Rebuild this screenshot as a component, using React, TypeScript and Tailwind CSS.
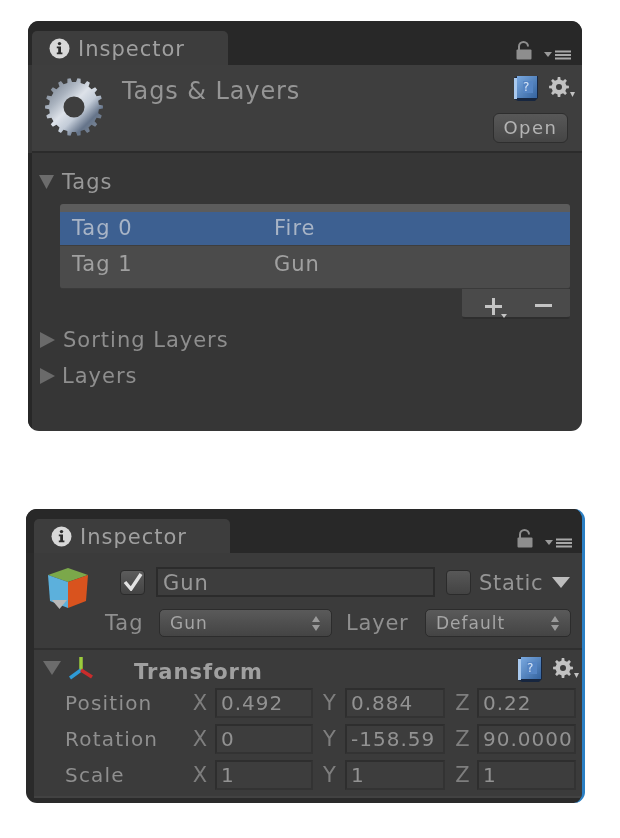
import { useId } from "react";

const font = "font-['DejaVu_Sans',sans-serif]";

function gearPath(cx: number, cy: number, outer: number, inner: number, hole: number, teeth: number) {
  const pts: string[] = [];
  const step = (Math.PI * 2) / teeth;
  for (let i = 0; i < teeth; i++) {
    const a = i * step;
    const corners: [number, number][] = [
      [a - step * 0.27, inner],
      [a - step * 0.16, outer],
      [a + step * 0.16, outer],
      [a + step * 0.27, inner],
    ];
    corners.forEach(([t, r]) => {
      pts.push(`${(cx + Math.cos(t) * r).toFixed(2)} ${(cy + Math.sin(t) * r).toFixed(2)}`);
    });
  }
  return `M${pts.join("L")}Z M${cx + hole} ${cy}A${hole} ${hole} 0 1 0 ${cx - hole} ${cy}A${hole} ${hole} 0 1 0 ${cx + hole} ${cy}Z`;
}

function BigGear() {
  return (
    <svg width="60" height="60" viewBox="0 0 60 60" className="shrink-0">
      <defs>
        <linearGradient id="biggear" x1="0.1" y1="0.1" x2="0.9" y2="0.9">
          <stop offset="0" stopColor="#7d8794" />
          <stop offset="0.25" stopColor="#aab3bf" />
          <stop offset="0.45" stopColor="#dde2e9" />
          <stop offset="0.62" stopColor="#c3ccd8" />
          <stop offset="0.82" stopColor="#65748a" />
          <stop offset="1" stopColor="#7d8896" />
        </linearGradient>
      </defs>
      <path d={gearPath(30, 30, 29, 25, 10.5, 18)} fill="url(#biggear)" fillRule="evenodd" />
    </svg>
  );
}

function SmallGear() {
  return (
    <svg width="28" height="22" viewBox="0 0 28 22" className="mt-[2px] shrink-0">
      <path d={gearPath(11, 10, 10, 7.5, 3, 8)} fill="#c2c2c2" fillRule="evenodd" />
      <path d="M22 15h5l-2.5 5z" fill="#c2c2c2" />
    </svg>
  );
}

function InfoIcon() {
  return (
    <svg width="21" height="21" viewBox="0 0 21 21" className="shrink-0">
      <circle cx="10.5" cy="10.5" r="10" fill="#d8d8d8" />
      <circle cx="10.5" cy="5.6" r="1.7" fill="#2c2c2c" />
      <path d="M7.8 8.6h4.2v6h1.4v1.6H7.8v-1.6h1.4v-4.4H7.8z" fill="#2c2c2c" />
    </svg>
  );
}

function LockMenu() {
  return (
    <div className="flex items-end gap-3">
      <svg width="16" height="19" viewBox="0 0 16 19">
        <path d="M3 9V5.5a4.5 4.5 0 0 1 9 0" fill="none" stroke="#8e8e8e" strokeWidth="2" />
        <rect x="0.5" y="8.5" width="15" height="10" rx="1" fill="#8e8e8e" />
      </svg>
      <svg width="28" height="10" viewBox="0 0 28 10">
        <path d="M0 2h8l-4 5z" fill="#9a9a9a" />
        <path d="M11 0.5h16v2H11zM11 4h16v2H11zM11 7.5h16v2H11z" fill="#a8a8a8" />
      </svg>
    </div>
  );
}

function HelpBook() {
  const id = useId();
  return (
    <div className="relative h-[27px] w-[26px] shrink-0">
      <svg width="26" height="27" viewBox="0 0 26 27" className="absolute inset-0">
        <defs>
          <linearGradient id={id} x1="0" y1="0" x2="1" y2="1">
            <stop offset="0" stopColor="#7aa9e0" />
            <stop offset="1" stopColor="#34639f" />
          </linearGradient>
        </defs>
        <path d="M1 3 5 1h20v22l-3 3H5l-4-2z" fill="#17263f" />
        <path d="M1 3h3v21H1z" fill="#a9c9ee" />
        <rect x="4" y="1" width="20" height="22" fill={`url(#${id})`} />
        <rect x="10" y="6" width="10" height="12" fill="#5585c4" />
      </svg>
      <span className="absolute left-[10px] top-[5px] text-[12px] leading-[14px] text-[#d6e4f6]">?</span>
    </div>
  );
}

function CubeIcon() {
  return (
    <svg width="44" height="44" viewBox="0 0 44 44" className="shrink-0">
      <path d="M22 1 42 8 22 15 2 8z" fill="#7ba84a" />
      <path d="M2 8 22 15V41L4 34z" fill="#5cb0dc" />
      <path d="M42 8 22 15V41L40 34z" fill="#d9531e" />
      <path d="M6 33h15l-7.5 9z" fill="#b8b8b8" />
    </svg>
  );
}

function AxesIcon() {
  return (
    <svg width="26" height="24" viewBox="0 0 26 24" className="shrink-0">
      <path d="M13 14V1" stroke="#9ccc3c" strokeWidth="3.5" />
      <path d="M13 14 2 22" stroke="#2f9bd6" strokeWidth="3.5" />
      <path d="M13 14 24 21" stroke="#c92c2c" strokeWidth="3.5" />
    </svg>
  );
}

function TriangleDown({ big }: { big?: boolean }) {
  return (
    <svg width={big ? 18 : 15} height="14" viewBox="0 0 18 14" preserveAspectRatio="none" className="shrink-0">
      <path d="M0 0h18L9 14z" fill="#6c6c6c" />
    </svg>
  );
}

function TriangleRight() {
  return (
    <svg width="15" height="16" viewBox="0 0 15 16" className="shrink-0">
      <path d="M0 0l15 8L0 16z" fill="#6a6a6a" />
    </svg>
  );
}

function Updown() {
  return (
    <svg width="8" height="15" viewBox="0 0 8 15" className="shrink-0">
      <path d="M4 0l4 6H0zM4 15l4-6H0z" fill="#9a9a9a" />
    </svg>
  );
}

function Tab() {
  return (
    <div className="flex h-[34px] w-[196px] items-center gap-[8px] rounded-t-[5px] bg-[#3d3d3d] pl-[17px]">
      <InfoIcon />
      <span className="mt-[2px] text-[21px] leading-none tracking-[1px] text-[#a0a0a0]">Inspector</span>
    </div>
  );
}

function Dropdown({ label, className }: { label: string; className: string }) {
  return (
    <div className={`flex h-[28px] items-center justify-between rounded-[5px] border border-[#2c2c2c] bg-gradient-to-b from-[#5a5a5a] to-[#444444] pl-[10px] pr-[11px] ${className}`}>
      <span className="text-[17px] leading-none tracking-[1px] text-[#a5a5a5]">{label}</span>
      <Updown />
    </div>
  );
}

function NumberField({ axis, value, axisClass }: { axis: string; value: string; axisClass: string }) {
  return (
    <>
      <span className={`text-center text-[21px] leading-none text-[#7e7e7e] ${axisClass}`}>{axis}</span>
      <div className="flex h-[30px] items-center border-2 border-[#2e2e2e] border-b-[#333333] border-r-[#333333] bg-[#3d3d3d] pl-[4px] pr-[2px]">
        <span className="min-w-0 overflow-hidden whitespace-nowrap text-[20px] leading-[26px] tracking-[1px] text-[#929292]">{value}</span>
      </div>
    </>
  );
}

function TransformRow({ label, x, y, z }: { label: string; x: string; y: string; z: string }) {
  return (
    <div className="grid h-[30px] grid-cols-[125px_25px_98px_32px_100px_32px_99px] items-center">
      <span className="text-[20px] leading-none tracking-[1.2px] text-[#8f8f8f]">{label}</span>
      <NumberField axis="X" value={x} axisClass="pr-[5px]" />
      <NumberField axis="Y" value={y} axisClass="pl-[1px]" />
      <NumberField axis="Z" value={z} axisClass="pl-[3px]" />
    </div>
  );
}

function TagsPanel() {
  return (
    <section className="ml-[28px] h-[410px] w-[554px] overflow-hidden rounded-[11px] bg-[#363636]">
      <div className="flex h-[44px] items-end justify-between bg-[#282828] pl-[4px] pr-[10px]">
        <Tab />
        <div className="pb-[5px]">
          <LockMenu />
        </div>
      </div>
      <div className="ml-[4px] flex h-[88px] border-b-2 border-[#2b2b2b] bg-[#3e3e3e]">
        <div className="ml-[12px] mt-[12px]">
          <BigGear />
        </div>
        <h1 className="ml-[18px] mt-[12px] text-[24px] font-normal leading-[28px] tracking-[0.9px] text-[#959595]">Tags &amp; Layers</h1>
        <div className="ml-auto mr-[6px] mt-[10px] flex flex-col items-end gap-[11px]">
          <div className="flex items-start gap-[9px]">
            <HelpBook />
            <SmallGear />
          </div>
          <button className="mr-[8px] flex h-[30px] w-[75px] items-center justify-center rounded-[6px] border border-[#2e2e2e] bg-gradient-to-b from-[#585858] to-[#454545] text-[18px] leading-none tracking-[1.5px] text-[#b4b4b4]">
            Open
          </button>
        </div>
      </div>
      <div className="flex h-[322px]">
        <div className="w-[4px] bg-[#272727]" />
        <div className="flex-1">
          <div className="mt-[20px] flex h-[18px] items-center gap-[8px] pl-[7px]">
            <TriangleDown />
            <span className="text-[21px] leading-none tracking-[1px] text-[#989898]">Tags</span>
          </div>
          <div className="ml-[28px] mr-[12px] mt-[13px]">
            <div className="h-[8px] rounded-t-[3px] bg-[#5c5c5c]" />
            <div className="flex h-[33px] items-center bg-[#3d6091] pl-[12px] text-[21px] leading-none tracking-[1px] text-[#a8b4c6]">
              <span className="w-[202px]">Tag 0</span>
              <span>Fire</span>
            </div>
            <div className="flex h-[44px] items-start rounded-b-[3px] border-y border-t-[#3e3e3e] border-b-[#3a3a3a] bg-[#4b4b4b] pl-[12px] pt-[8px] text-[21px] leading-none tracking-[1px] text-[#a0a0a0]">
              <span className="w-[202px]">Tag 1</span>
              <span>Gun</span>
            </div>
            <div className="ml-auto flex h-[30px] w-[108px] items-start justify-center gap-[26px] rounded-b-[3px] border-b-2 border-[#2e2e2e] bg-[#4a4a4a] pl-[5px] pt-[9px]">
              <svg width="24" height="22" viewBox="0 0 24 22">
                <path d="M7 0h3v7h7v3h-7v7H7v-7H0V7h7z" fill="#c4c4c4" />
                <path d="M16 16h6l-3 4z" fill="#c4c4c4" />
              </svg>
              <svg width="18" height="12" viewBox="0 0 18 12" className="mt-[4px]">
                <path d="M0 2h17v3H0z" fill="#c4c4c4" />
              </svg>
            </div>
          </div>
          <div className="mt-[12px] flex h-[18px] items-center gap-[8px] pl-[8px]">
            <TriangleRight />
            <span className="text-[21px] leading-none tracking-[1px] text-[#8e8e8e]">Sorting Layers</span>
          </div>
          <div className="mt-[18px] flex h-[18px] items-center gap-[7px] pl-[8px]">
            <TriangleRight />
            <span className="text-[21px] leading-none tracking-[1px] text-[#8e8e8e]">Layers</span>
          </div>
        </div>
      </div>
    </section>
  );
}

function GameObjectPanel() {
  return (
    <section className="ml-[26px] mt-[78px] h-[294px] w-[559px] overflow-hidden rounded-[11px] border-r-[3px] border-[#2a7fc4] bg-[#2a2a2a]">
      <div className="flex h-[44px] items-end justify-between bg-[#282828] pl-[8px] pr-[9px]">
        <Tab />
        <div className="pb-[5px]">
          <LockMenu />
        </div>
      </div>
      <div className="ml-[8px] h-[245px] border-b-2 border-[#424242] bg-[#3b3b3b]">
        <div className="flex h-[97px] border-b-2 border-[#2f2f2f]">
          <div className="ml-[12px] mt-[14px]">
            <CubeIcon />
          </div>
          <div className="ml-[15px] flex-1">
            <div className="mt-[14px] flex h-[30px] items-center">
              <div className="ml-[15px] flex h-[25px] w-[25px] items-center justify-center rounded-[4px] border border-[#2b2b2b] bg-gradient-to-b from-[#5c5c5c] to-[#434343]">
                <svg width="20" height="18" viewBox="0 0 20 18">
                  <path d="M2 9l6 7L18 1" fill="none" stroke="#e2e2e2" strokeWidth="3.4" />
                </svg>
              </div>
              <div className="ml-[11px] flex h-[30px] w-[279px] items-center border-2 border-[#2b2b2b] bg-[#3d3d3d] pl-[5px] pt-[2px] text-[21px] leading-none tracking-[1px] text-[#989898]">
                Gun
              </div>
              <div className="ml-[11px] h-[25px] w-[25px] rounded-[4px] border border-[#2b2b2b] bg-gradient-to-b from-[#585858] to-[#434343]" />
              <span className="ml-[8px] mt-[2px] text-[21px] leading-none tracking-[0.7px] text-[#959595]">Static</span>
              <svg width="18" height="11" viewBox="0 0 18 11" className="ml-[9px] shrink-0">
                <path d="M0 0h18L9 11z" fill="#bdbdbd" />
              </svg>
            </div>
            <div className="mt-[12px] flex h-[28px] items-center">
              <span className="w-[54px] text-[21px] leading-none tracking-[1px] text-[#8f8f8f]">Tag</span>
              <Dropdown label="Gun" className="w-[173px]" />
              <span className="ml-[14px] w-[79px] text-[21px] leading-none tracking-[0.8px] text-[#8f8f8f]">Layer</span>
              <Dropdown label="Default" className="w-[146px]" />
            </div>
          </div>
        </div>
        <div className="flex h-[35px] items-center pl-[9px] pr-[2px]">
          <TriangleDown big />
          <div className="ml-[7px]">
            <AxesIcon />
          </div>
          <span className="ml-[40px] mt-[9px] text-[21px] font-bold leading-none tracking-[1px] text-[#a0a0a0]">Transform</span>
          <div className="ml-auto mt-[4px] flex items-start gap-[9px]">
            <HelpBook />
            <SmallGear />
          </div>
        </div>
        <div className="ml-[31px] mt-[3px] flex flex-col gap-[6px]">
          <TransformRow label="Position" x="0.492" y="0.884" z="0.22" />
          <TransformRow label="Rotation" x="0" y="-158.59" z="90.0000" />
          <TransformRow label="Scale" x="1" y="1" z="1" />
        </div>
      </div>
    </section>
  );
}

export default function App() {
  return (
    <div className={`min-h-[838px] w-[620px] bg-white pt-[21px] blur-[0.5px] ${font}`}>
      <TagsPanel />
      <GameObjectPanel />
    </div>
  );
}
